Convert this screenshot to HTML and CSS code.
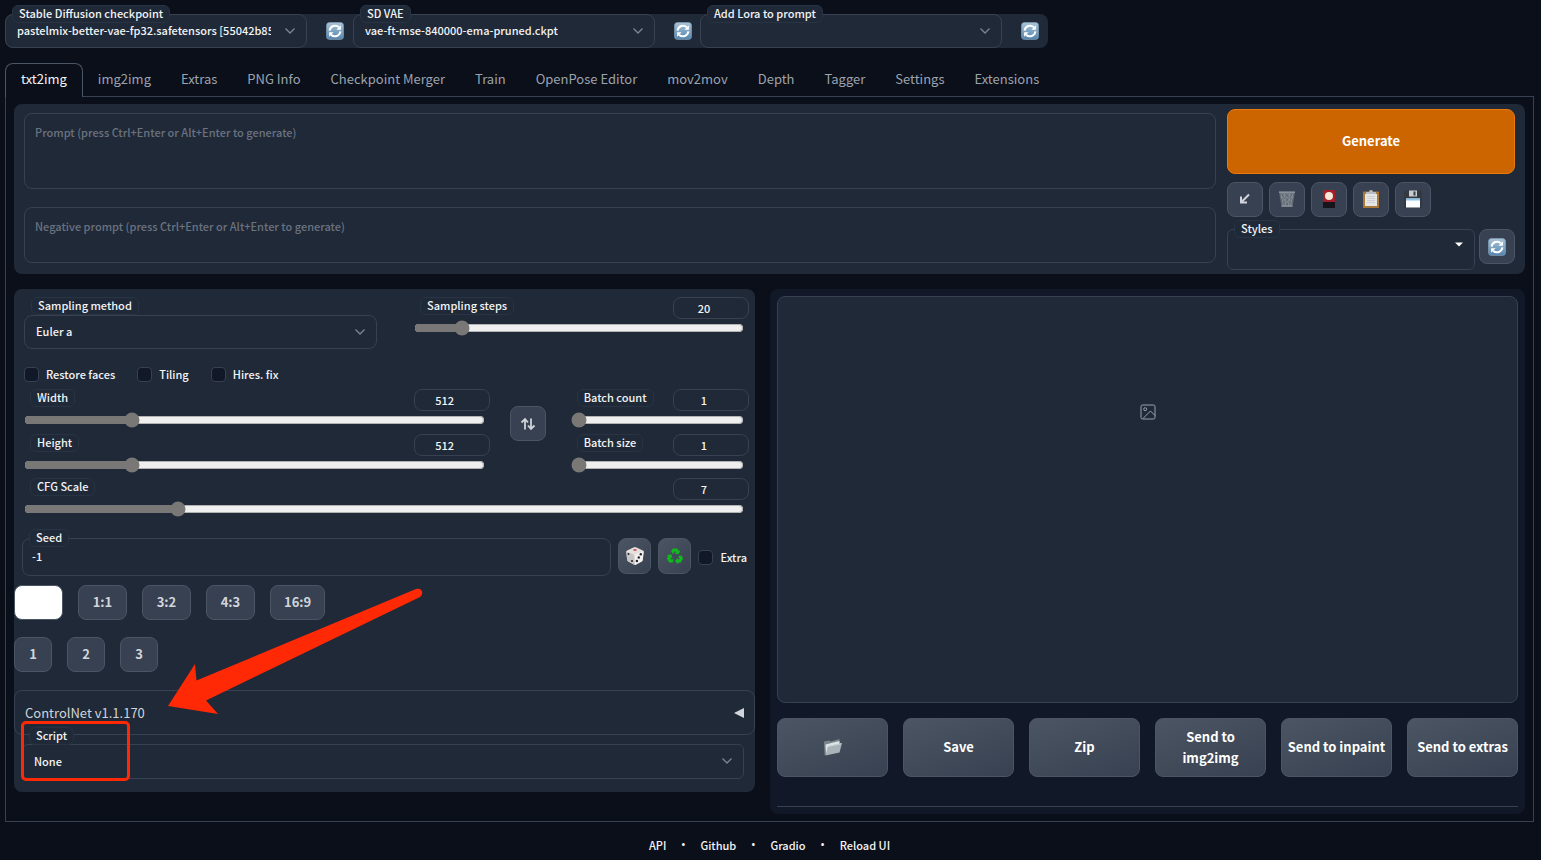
FILE: index.html
```html
<!DOCTYPE html>
<html lang="en">
<head>
<meta charset="utf-8">
<title>Stable Diffusion</title>
<link rel="stylesheet" href="styles.css">
</head>
<body>
<svg class="defs" aria-hidden="true">
  <defs>
    <linearGradient id="blue" x1="0" y1="0" x2="0" y2="1"><stop offset="0" stop-color="#a9c4d8"/><stop offset="1" stop-color="#5484ae"/></linearGradient>
    <symbol id="chevron" viewBox="0 0 12 8"><path d="M1.5 1.5 6 6l4.500-4.500" fill="none" stroke="currentColor" stroke-width="1.300"/></symbol>
    <symbol id="refresh" viewBox="0 0 18 18">
      <rect x=".5" y=".5" width="17" height="17" rx="3" fill="url(#blue)" stroke="#8aa5b9" stroke-width=".6"/>
      <path d="M3.600 8.600a5.500 5.500 0 0 1 9.300-3.300M14.400 9.400a5.500 5.500 0 0 1-9.300 3.300" fill="none" stroke="#fff" stroke-width="2"/>
      <path d="M14.900 3.200v4.500h-4.500zM3.100 14.800v-4.500h4.500z" fill="#fff"/>
    </symbol>
  </defs>
</svg>

<header class="quick">
  <div class="quick-item">
    <div class="field">
      <label class="tag" for="ckpt">Stable Diffusion checkpoint</label>
      <select id="ckpt"><option>pastelmix-better-vae-fp32.safetensors [55042b8531]</option></select>
      <svg class="chev"><use href="#chevron"/></svg>
    </div>
    <button class="bare" aria-label="Refresh checkpoints"><svg class="ico"><use href="#refresh"/></svg></button>
  </div>
  <div class="quick-item">
    <div class="field">
      <label class="tag" for="vae">SD VAE</label>
      <select id="vae"><option>vae-ft-mse-840000-ema-pruned.ckpt</option></select>
      <svg class="chev"><use href="#chevron"/></svg>
    </div>
    <button class="bare" aria-label="Refresh VAE"><svg class="ico"><use href="#refresh"/></svg></button>
  </div>
  <div class="quick-item">
    <div class="field">
      <label class="tag" for="lora">Add Lora to prompt</label>
      <select id="lora"><option></option></select>
      <svg class="chev"><use href="#chevron"/></svg>
    </div>
    <button class="bare" aria-label="Refresh Lora"><svg class="ico"><use href="#refresh"/></svg></button>
  </div>
</header>

<nav class="tabs">
  <button class="tab active">txt2img</button>
  <button class="tab">img2img</button>
  <button class="tab">Extras</button>
  <button class="tab">PNG Info</button>
  <button class="tab">Checkpoint Merger</button>
  <button class="tab">Train</button>
  <button class="tab">OpenPose Editor</button>
  <button class="tab">mov2mov</button>
  <button class="tab">Depth</button>
  <button class="tab">Tagger</button>
  <button class="tab">Settings</button>
  <button class="tab">Extensions</button>
</nav>

<main class="panel">
  <section class="toprow">
    <div class="prompts">
      <textarea class="prompt" aria-label="Prompt" placeholder="Prompt (press Ctrl+Enter or Alt+Enter to generate)"></textarea>
      <textarea class="negative" aria-label="Negative prompt" placeholder="Negative prompt (press Ctrl+Enter or Alt+Enter to generate)"></textarea>
    </div>
    <div class="actions">
      <button class="generate">Generate</button>
      <div class="tools">
        <button class="tool" aria-label="Read parameters"><svg class="ico" viewBox="0 0 18 18"><path d="M13 4.500 5.500 12M5 6.500V12.500h6" fill="none" stroke="#d1d5db" stroke-width="2"/></svg></button>
        <button class="tool" aria-label="Clear prompt"><svg class="ico" viewBox="0 0 18 18"><path d="M1 1.500h16L14.500 17h-11z" fill="#626b75"/><path d="M3 3l2.500 13M6.500 3l1 13M11.500 3l-1 13M15 3l-2.500 13M2.500 6l10 9M4 3l10 9M9 3l6 5M15.500 6l-10 9M14 3 4 12M9 3 3 8" stroke="#8e969e" stroke-width=".6"/><path d="M1 1.500h16v1.500H1z" fill="#8a929b"/><path d="M3.500 16h11" stroke="#9aa1a8"/></svg></button>
        <button class="tool" aria-label="Extra networks"><svg class="ico" viewBox="0 0 18 18"><path d="M3 0h12v18H3z" fill="#a31f2c"/><path d="M3 12h12v6H3z" fill="#15151b"/><circle cx="9" cy="6" r="4" fill="#f6e9d8"/></svg></button>
        <button class="tool" aria-label="Apply style"><svg class="ico" viewBox="0 0 18 18"><rect x="1" y="1.500" width="16" height="16.500" rx=".8" fill="#aa7739"/><path d="M3 4h12v12H3z" fill="#e6e6e6"/><path d="M5 6.500h8M5 8.500h8M5 10.500h8M5 12.500h8" stroke="#c3c4c7" stroke-width=".7"/><path d="M4 4V2h3q0-2 2-2t2 2h3v2z" fill="#b7bdc4"/></svg></button>
        <button class="tool" aria-label="Save style"><svg class="ico" viewBox="0 0 18 18"><path d="M0 .5h16.500L18 2v16H0z" fill="#343941"/><path d="M5 .5h8v6H5z" fill="#c6ccd0"/><path d="M9.500 1.500h2v4h-2z" fill="#3a3f48"/><path d="M2 8.500h14v9H2z" fill="#fafcff"/><path d="M2 8.500h14v2H2z" fill="#8ec4ea"/></svg></button>
      </div>
      <div class="styles-row">
        <div class="field styles-field">
          <label class="tag" for="styles">Styles</label>
          <select id="styles"><option></option></select>
          <svg class="caret" viewBox="0 0 8 5"><path d="M0 .5h8L4 4.500z" fill="#fff"/></svg>
        </div>
        <button class="tool" aria-label="Refresh styles"><svg class="ico"><use href="#refresh"/></svg></button>
      </div>
    </div>
  </section>

  <div class="columns">
    <section class="settings">
      <div class="sampling">
        <div class="field sampler">
          <label class="tag" for="sampler">Sampling method</label>
          <select id="sampler"><option>Euler a</option></select>
          <svg class="chev"><use href="#chevron"/></svg>
        </div>
        <div class="slider">
          <div class="slider-head"><label class="tag" for="steps">Sampling steps</label><input class="num" type="number" value="20" aria-label="Sampling steps value"></div>
          <input id="steps" type="range" min="1" max="150" value="20">
        </div>
      </div>

      <div class="checks">
        <label class="check"><input type="checkbox">Restore faces</label>
        <label class="check"><input type="checkbox">Tiling</label>
        <label class="check"><input type="checkbox">Hires. fix</label>
      </div>

      <div class="dims">
        <div class="stack">
          <div class="slider">
            <div class="slider-head"><label class="tag" for="width">Width</label><input class="num" type="number" value="512" aria-label="Width value"></div>
            <input id="width" type="range" min="64" max="2048" value="512">
          </div>
          <div class="slider">
            <div class="slider-head"><label class="tag" for="height">Height</label><input class="num" type="number" value="512" aria-label="Height value"></div>
            <input id="height" type="range" min="64" max="2048" value="512">
          </div>
        </div>
        <button class="tool swap" aria-label="Swap width and height"><svg class="ico" viewBox="0 0 18 18"><path d="M6 14.500V4.500M2.500 7.500 6 4l3 3.500M12 3.500v10M9 10.500l3 3.500 3.500-3.500" fill="none" stroke="#d1d5db" stroke-width="1.800"/></svg></button>
        <div class="stack">
          <div class="slider">
            <div class="slider-head"><label class="tag" for="count">Batch count</label><input class="num" type="number" value="1" aria-label="Batch count value"></div>
            <input id="count" type="range" min="1" max="100" value="1">
          </div>
          <div class="slider">
            <div class="slider-head"><label class="tag" for="size">Batch size</label><input class="num" type="number" value="1" aria-label="Batch size value"></div>
            <input id="size" type="range" min="1" max="8" value="1">
          </div>
        </div>
      </div>

      <div class="slider cfg">
        <div class="slider-head"><label class="tag" for="cfg">CFG Scale</label><input class="num" type="number" value="7" aria-label="CFG Scale value"></div>
        <input id="cfg" type="range" min="1" max="30" step="0.5" value="7">
      </div>

      <div class="seed">
        <div class="field">
          <label class="tag" for="seed">Seed</label>
          <input id="seed" type="text" value="-1">
        </div>
        <button class="seed-btn" aria-label="Random seed"><svg class="ico" viewBox="0 0 18 18"><path d="M1.200 3.500Q0 4 .2 5l1 8q.1 1 1 1.400l6 3.300q.8.400 1.600 0l6-3.300q.9-.500 1-1.400l1-8q.1-1-1-1.500L10 .3Q9 0 8 .3z" fill="#e4e1df"/><path d="M.5 4.500 8.500 8 9 18l-7-3.700q-.8-.500-.9-1.300z" fill="#c6c4c4"/><path d="M8.500 8l9-3.800-1 9q-.2.900-1 1.300L9 18z" fill="#f3f1ef"/><ellipse cx="9" cy="3" rx="1.900" ry="1" fill="#c95e66"/><g fill="#24252a"><circle cx="2.500" cy="7" r="1"/><circle cx="6" cy="14" r="1"/><circle cx="14.800" cy="7.300" r="1.200"/><circle cx="12.800" cy="10.500" r="1.200"/><circle cx="10.900" cy="14" r="1.200"/></g></svg></button>
        <button class="seed-btn" aria-label="Reuse seed"><svg class="ico" viewBox="0 0 18 18"><g id="recy"><path d="M5 4.500 6.800 1.500h4.500l1.500 2.300 1.500-.8-1.500 4.300-4.300-.8 1.500-.8-1-1.700L7 7z" fill="#0fbb1a"/></g><use href="#recy" transform="rotate(120 9 9.500)"/><use href="#recy" transform="rotate(240 9 9.500)"/></svg></button>
        <label class="check"><input type="checkbox">Extra</label>
      </div>

      <div class="ratios">
        <button class="chip blank" aria-label="Default ratio"></button>
        <button class="chip">1:1</button>
        <button class="chip">3:2</button>
        <button class="chip">4:3</button>
        <button class="chip">16:9</button>
      </div>
      <div class="ratios presets">
        <button class="chip">1</button>
        <button class="chip">2</button>
        <button class="chip">3</button>
      </div>

      <button class="accordion"><span>ControlNet v1.1.170</span><svg class="tri" viewBox="0 0 10 10"><path d="M10 0v10L0 5z" fill="#d1d5db"/></svg></button>

      <div class="field script">
        <label class="tag" for="script">Script</label>
        <select id="script"><option>None</option></select>
        <svg class="chev"><use href="#chevron"/></svg>
      </div>

      <div class="mark-box"></div>
      <svg class="mark-arrow" viewBox="0 0 256 128" aria-hidden="true"><path d="M0 119 27 77l1.500 16.500L248 2c6-2 8.500 4.500 4 8L38 113.500 50 127z" fill="#ff2a05"/></svg>
    </section>

    <section class="results">
      <div class="gallery">
        <svg class="image-ico" viewBox="0 0 16 16" fill="none" stroke="#9ca3af"><rect x="1" y="1" width="14" height="14" rx="1.500"/><circle cx="5.200" cy="5.200" r="1.500"/><path d="M3 14.500 10.500 7 15 11.500"/></svg>
      </div>
      <div class="sends">
        <button class="send" aria-label="Open folder"><svg class="ico" viewBox="0 0 18 18"><path d="M0 3.500 5 2.500l1.500 1L15.500 1v4L2 17 .5 17z" fill="#76868b"/><path d="M1.500 6.500 15.500 3v4L2 16z" fill="#dfe5e7"/><path d="M4 8 18 5l-2.500 9.500L1.500 17.500z" fill="#a9b3ba"/><path d="M4.300 8.500 17.300 5.700" stroke="#d6dde0" stroke-width=".8"/></svg></button>
        <button class="send">Save</button>
        <button class="send">Zip</button>
        <button class="send">Send to<br>img2img</button>
        <button class="send">Send to inpaint</button>
        <button class="send">Send to extras</button>
      </div>
      <hr>
    </section>
  </div>
</main>

<footer class="footer">
  <a href="#">API</a><span>•</span><a href="#">Github</a><span>•</span><a href="#">Gradio</a><span>•</span><a href="#">Reload UI</a>
</footer>
</body>
</html>
```

FILE: styles.css
```css
* { box-sizing: border-box; }

body {
  margin: 0;
  padding: 14px 7px 0 5px;
  background: #0b0f19;
  color: #f3f4f6;
  font: 500 11px/18px "Noto Sans CJK SC", "Noto Sans", sans-serif;
}

button, input, select, textarea { font: inherit; color: inherit; margin: 0; }
button { padding: 0; cursor: pointer; }
svg { display: block; }
.defs { position: absolute; width: 0; height: 0; }
.ico { width: 18px; height: 18px; }

/* Fields */
.field {
  position: relative;
  border: 1px solid #374151;
  border-radius: 8px;
  background: #1f2937;
}
.field select, .field input {
  display: block;
  width: 100%;
  height: 32px;
  padding: 0 35px 2px 11px;
  border: 0;
  background: transparent;
  appearance: none;
  outline: 0;
}
.tag {
  padding: 0 6px 2px;
  border: 1px solid #283443;
  border-radius: 6px;
  background: #1f2937;
  line-height: 14px;
  white-space: nowrap;
}
.field .tag { position: absolute; left: 6px; top: -10px; z-index: 1; }
.chev {
  position: absolute;
  right: 10px;
  top: 12px;
  width: 12px;
  height: 8px;
  color: #7c8592;
  pointer-events: none;
}
.caret { position: absolute; right: 11px; top: 12px; width: 8px; height: 5px; pointer-events: none; }

/* Quick settings */
.quick { display: flex; }
.quick-item { display: flex; width: 347px; background: #1f2937; }
.quick-item:last-child { width: 348px; border-radius: 0 8px 8px 0; }
.quick-item:first-child { width: 348px; border-radius: 8px 0 0 8px; }
.quick-item .field { width: 302px; }
.bare { flex: 1; display: flex; align-items: center; justify-content: center; padding-left: 10px; border: 0; background: none; }

/* Tabs */
.tabs { display: flex; margin-top: 15px; }
.tab {
  height: 34px;
  padding: 0 14px 4px;
  border: 1px solid transparent;
  border-bottom: 0;
  border-radius: 8px 8px 0 0;
  background: transparent;
  color: #9ca3af;
  font-size: 13px;
  font-weight: 400;
  line-height: 20px;
}
.tab.active {
  padding: 0 15px 4px;
  border-color: #4b5563;
  background: #0b0f19;
  color: #f3f4f6;
  z-index: 1;
}

.panel { margin-top: -1px; padding: 7px 8px; border: 1px solid #374151; }

/* Prompt row */
.toprow {
  display: flex;
  gap: 11px;
  padding: 5px 10px 4px;
  border-radius: 8px;
  background: #1f2937;
}
.prompts { flex: 1; display: flex; flex-direction: column; gap: 18px; padding-top: 4px; }
textarea {
  display: block;
  width: 100%;
  padding: 9px 10px;
  border: 1px solid #374151;
  border-radius: 8px;
  background: #1f2937;
  resize: none;
}
textarea::placeholder { color: #6b7280; }
.prompt { height: 76px; }
.negative { height: 56px; }
.actions { width: 288px; }
.generate {
  display: block;
  width: 100%;
  height: 65px;
  padding-bottom: 2px;
  border: 1px solid #ea7a0c;
  border-radius: 8px;
  background: #cc6400;
  color: #fff;
  font-size: 13px;
  font-weight: 700;
}
.tools { display: flex; gap: 6px; margin-top: 8px; }
.tool {
  display: flex;
  align-items: center;
  justify-content: center;
  width: 36px;
  height: 35px;
  border: 1px solid #4b5563;
  border-radius: 8px;
  background: #374151;
}
.tools .tool { padding-bottom: 2px; }
.styles-row { display: flex; gap: 4px; margin-top: 12px; }
.styles-field { flex: 1; height: 41px; border-radius: 6px; }

/* Columns */
.columns { display: flex; align-items: flex-start; gap: 15px; margin-top: 15px; }
.settings {
  position: relative;
  flex: 1 1 0;
  min-width: 0;
  padding-bottom: 13px;
  border-radius: 8px;
  background: #1f2937;
}
.results { flex: 1 1 0; padding: 7px; border-radius: 8px; background: #111827; }

.sampling { display: grid; grid-template-columns: 353fr 335fr; gap: 37px; padding: 8px 6px 0 10px; }
.sampler { margin-top: 18px; }
.sampler .tag { top: -19px; }

.slider-head { display: flex; justify-content: space-between; align-items: flex-start; }
.slider-head .tag { margin-left: 6px; }
.slider input[type="range"] {
  display: block;
  width: calc(100% - 5px);
  height: 16px;
  margin: 1px 0 0;
  accent-color: #7a7777;
}
.num {
  width: 76px;
  height: 22px;
  padding: 0 14px 0 0;
  border: 1px solid #374151;
  border-radius: 8px;
  background: #1f2937;
  text-align: center;
  appearance: textfield;
}
.num::-webkit-inner-spin-button { display: none; }

.checks { display: flex; gap: 22px; padding: 16px 10px 0; }
.check { display: flex; align-items: center; gap: 7px; white-space: nowrap; }
.check input {
  width: 15px;
  height: 15px;
  border: 1px solid #374151;
  border-radius: 4px;
  background: #111827;
  appearance: none;
}

.dims { display: grid; grid-template-columns: 465fr 41px 178fr; gap: 20px; padding: 6px 6px 0 10px; }
.stack { display: flex; flex-direction: column; gap: 6px; }
.swap { margin-top: 17px; }
.cfg { padding: 5px 6px 0 10px; }

.seed { display: flex; gap: 7px; margin-top: 21px; padding: 0 8px; }
.seed .field { flex: 1; }
.seed .field input { height: 36px; padding: 0 9px 2px; }
.seed-btn {
  display: flex;
  align-items: center;
  justify-content: center;
  width: 33px;
  height: 36px;
  border: 1px solid #4b5563;
  border-radius: 8px;
  background: linear-gradient(135deg, #4b5563, #374151);
}

.ratios { display: flex; gap: 15px; margin-top: 9px; }
.chip {
  min-width: 49px;
  height: 35px;
  padding: 0 13px 2px;
  border: 1px solid #4b5563;
  border-radius: 8px;
  background: #374151;
  color: #d1d5db;
  font-size: 13px;
  font-weight: 700;
}
.blank { background: #fff; }
.presets { margin-top: 17px; }
.presets .chip { min-width: 38px; }

.accordion {
  display: flex;
  align-items: center;
  justify-content: space-between;
  width: 100%;
  height: 45px;
  margin-top: 18px;
  padding: 0 10px;
  border: 1px solid #374151;
  border-radius: 8px;
  background: none;
  color: #d1d5db;
  font-size: 13px;
  font-weight: 400;
}
.tri { width: 10px; height: 10px; }
.script { margin: 9px 11px 0 8px; border-radius: 6px; }
.script select { height: 33px; }
.script .tag { top: -18px; }

/* Annotations over the settings column */
.mark-box {
  position: absolute;
  left: 7px;
  bottom: 11px;
  width: 109px;
  height: 60px;
  border: 3px solid #ff2a05;
  border-radius: 5px;
  pointer-events: none;
}
.mark-arrow { position: absolute; left: 154px; bottom: 77px; width: 256px; height: 128px; pointer-events: none; }

/* Results */
.gallery {
  height: 407px;
  padding-top: 107px;
  border: 1px solid #374151;
  border-radius: 8px;
  background: #1f2937;
}
.image-ico { width: 16px; height: 16px; margin: 0 auto; }
.sends { display: grid; grid-template-columns: repeat(6, 1fr); gap: 15px; margin-top: 15px; }
.send {
  display: flex;
  align-items: center;
  justify-content: center;
  min-height: 59px;
  padding-bottom: 2px;
  border: 1px solid #4b5563;
  border-radius: 8px;
  background: linear-gradient(160deg, #4b5563, #374151);
  color: #fff;
  font-size: 13px;
  font-weight: 700;
  line-height: 21px;
}
hr { margin: 29px 0 0; border: 0; border-top: 1px solid #374151; }

.footer { display: flex; justify-content: center; gap: 15px; margin-top: 14px; }
.footer span { font-family: "Noto Sans", sans-serif; }
.footer a { color: inherit; text-decoration: none; }
```
